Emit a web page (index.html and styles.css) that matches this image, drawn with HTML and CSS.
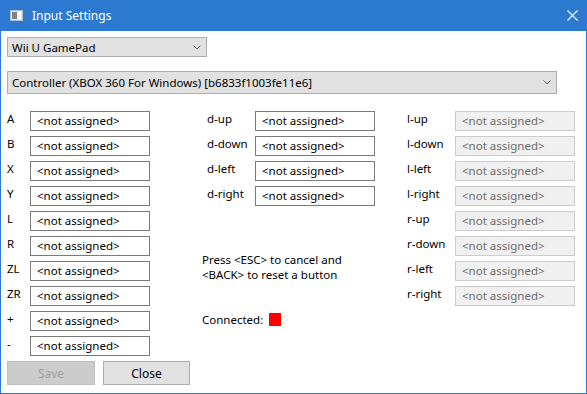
FILE: index.html
```html
<!DOCTYPE html>
<html lang="en">
<head>
  <meta charset="UTF-8">
  <title>Input Settings</title>
  <link rel="stylesheet" href="styles.css">
</head>
<body>

  <div class="window">
    <div class="titlebar">
      <svg class="app-icon" width="13" height="11" viewBox="0 0 13 11">
        <rect x="0.5" y="0.5" width="12" height="10" fill="#e8e8e8" stroke="#b8c2cc"/>
        <rect x="2" y="2" width="5" height="7" fill="#7a8591"/>
        <rect x="8" y="2" width="3" height="7" fill="#ffffff"/>
      </svg>
      <span class="title">Input Settings</span>
      <svg class="close-x" width="11" height="11" viewBox="0 0 11 11">
        <path d="M0.5 0.5 L10.5 10.5 M10.5 0.5 L0.5 10.5" stroke="#ffffff" stroke-width="1.1" fill="none"/>
      </svg>
    </div>

    <div class="content">
      <div class="combo combo-emu">
        <span>Wii U GamePad</span>
        <svg class="chevron" width="8" height="5" viewBox="0 0 8 5"><path d="M0.5 0.5 L4 4 L7.5 0.5" stroke="#606060" fill="none"/></svg>
      </div>
      <div class="combo combo-ctrl">
        <span>Controller (XBOX 360 For Windows) [b6833f1003fe11e6]</span>
        <svg class="chevron" width="8" height="5" viewBox="0 0 8 5"><path d="M0.5 0.5 L4 4 L7.5 0.5" stroke="#606060" fill="none"/></svg>
      </div>

      <div class="mapping">
        <div class="column col-left">
          <div class="row"><span class="label">A</span><div class="field">&lt;not assigned&gt;</div></div>
          <div class="row"><span class="label">B</span><div class="field">&lt;not assigned&gt;</div></div>
          <div class="row"><span class="label">X</span><div class="field">&lt;not assigned&gt;</div></div>
          <div class="row"><span class="label">Y</span><div class="field">&lt;not assigned&gt;</div></div>
          <div class="row"><span class="label">L</span><div class="field">&lt;not assigned&gt;</div></div>
          <div class="row"><span class="label">R</span><div class="field">&lt;not assigned&gt;</div></div>
          <div class="row"><span class="label">ZL</span><div class="field">&lt;not assigned&gt;</div></div>
          <div class="row"><span class="label">ZR</span><div class="field">&lt;not assigned&gt;</div></div>
          <div class="row"><span class="label">+</span><div class="field">&lt;not assigned&gt;</div></div>
          <div class="row"><span class="label">-</span><div class="field">&lt;not assigned&gt;</div></div>
        </div>

        <div class="column col-mid">
          <div class="row"><span class="label">d-up</span><div class="field">&lt;not assigned&gt;</div></div>
          <div class="row"><span class="label">d-down</span><div class="field">&lt;not assigned&gt;</div></div>
          <div class="row"><span class="label">d-left</span><div class="field">&lt;not assigned&gt;</div></div>
          <div class="row"><span class="label">d-right</span><div class="field">&lt;not assigned&gt;</div></div>
          <p class="hint">Press &lt;ESC&gt; to cancel and<br>&lt;BACK&gt; to reset a button</p>
          <div class="status">Connected: <span class="led"></span></div>
        </div>

        <div class="column col-right">
          <div class="row"><span class="label">l-up</span><div class="field disabled">&lt;not assigned&gt;</div></div>
          <div class="row"><span class="label">l-down</span><div class="field disabled">&lt;not assigned&gt;</div></div>
          <div class="row"><span class="label">l-left</span><div class="field disabled">&lt;not assigned&gt;</div></div>
          <div class="row"><span class="label">l-right</span><div class="field disabled">&lt;not assigned&gt;</div></div>
          <div class="row"><span class="label">r-up</span><div class="field disabled">&lt;not assigned&gt;</div></div>
          <div class="row"><span class="label">r-down</span><div class="field disabled">&lt;not assigned&gt;</div></div>
          <div class="row"><span class="label">r-left</span><div class="field disabled">&lt;not assigned&gt;</div></div>
          <div class="row"><span class="label">r-right</span><div class="field disabled">&lt;not assigned&gt;</div></div>
        </div>
      </div>

      <div class="actions">
        <button class="btn btn-save" disabled>Save</button>
        <button class="btn btn-close">Close</button>
      </div>
    </div>
  </div>

</body>
</html>
```

FILE: styles.css
```css
body {
  margin: 0;
  font-family: 'Segoe UI', 'Noto Sans', sans-serif;
  font-size: 11.5px;
  color: #000;
  background-color: #ffffff;
}

.window {
  width: 587px;
  height: 394px;
  box-sizing: border-box;
  border: 1px solid #2b79d0;
  border-top: none;
  background: white;
}

.titlebar {
  height: 31px;
  background-color: #2b79d0;
  display: flex;
  align-items: center;
  padding-left: 9px;
  color: white;
}

.app-icon {
  margin-top: -1px;
}

.title {
  margin-left: 9px;
  font-size: 12px;
}

.close-x {
  margin-left: auto;
  margin-right: 8px;
  margin-top: -1px;
}

.content {
  padding: 6px 0 0 6px;
}

.combo {
  box-sizing: border-box;
  display: flex;
  align-items: center;
  justify-content: space-between;
  background-color: #e1e1e1;
  border: 1px solid #adadad;
  padding: 0 5px 0 4px;
}

.combo-emu {
  width: 200px;
  height: 20px;
  margin-bottom: 14px;
}

.combo-ctrl {
  width: 550px;
  height: 23px;
}

.mapping {
  display: flex;
  margin-top: 17px;
}

.column {
  display: flex;
  flex-direction: column;
}

.col-left {
  width: 144px;
}

.col-mid {
  width: 173px;
  margin-left: 51px;
}

.col-mid .row {
  padding-left: 5px;
}

.col-right {
  width: 168px;
  margin-left: 32px;
}

.row {
  display: flex;
  height: 20px;
  margin-bottom: 5px;
}

.label {
  line-height: 15px;
}

.col-left .label {
  width: 23px;
}

.col-mid .label,
.col-right .label {
  width: 48px;
}

.field {
  box-sizing: border-box;
  width: 120px;
  height: 20px;
  border: 1px solid #7a7a7a;
  padding-left: 6px;
  line-height: 18px;
  background: white;
}

.field.disabled {
  border-color: #cccccc;
  background-color: #f0f0f0;
  color: #6d6d6d;
}

.hint {
  margin: 41px 0 0 0;
  line-height: 15px;
}

.status {
  display: flex;
  align-items: center;
  margin-top: 30px;
  line-height: 15px;
}

.led {
  display: inline-block;
  width: 12px;
  height: 13px;
  margin-left: 6px;
  background-color: #ff0000;
}

.actions {
  display: flex;
  gap: 8px;
}

.btn {
  box-sizing: border-box;
  height: 24px;
  font-family: inherit;
  font-size: 12px;
  padding: 0;
  border-radius: 0;
}

.btn-save {
  width: 88px;
  background-color: #cccccc;
  border: 1px solid #bfbfbf;
  color: #a0a0a0;
}

.btn-close {
  width: 87px;
  background-color: #e1e1e1;
  border: 1px solid #adadad;
  color: #000;
}
```
